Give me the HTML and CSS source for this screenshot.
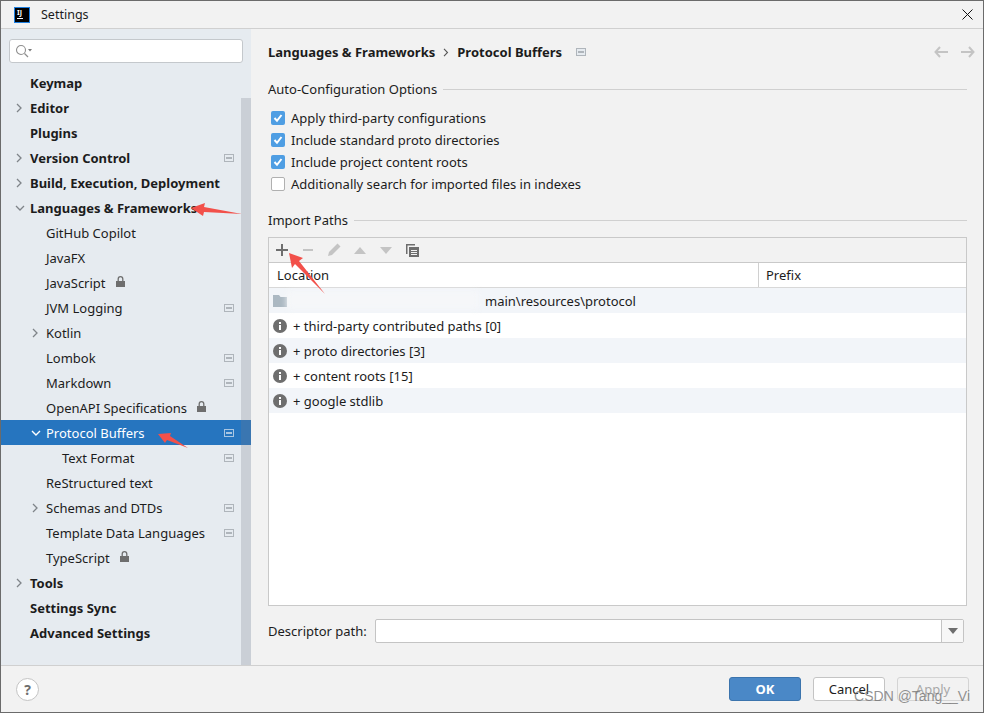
FILE: index.html
```html
<!DOCTYPE html>
<html lang="en">
<head>
    <meta charset="UTF-8">
    <title>Settings</title>
    <link rel="stylesheet" href="styles.css">
</head>
<body>
    <svg class="defs" width="0" height="0">
        <symbol id="pin" viewBox="0 0 10 8"><path d="M0 0h10v8H0z" fill="#afb5bb"/><path d="M1 1h8v6H1z" fill="#e6ebf0"/><path d="M2 3h6v2H2z" fill="#afb5bb"/></symbol>
        <symbol id="pin-sel" viewBox="0 0 10 8"><path d="M0 0h10v8H0z" fill="#a9c6e2"/><path d="M1 1h8v6H1z" fill="#2675bf"/><path d="M2 3h6v2H2z" fill="#a9c6e2"/></symbol>
        <symbol id="right" viewBox="0 0 8 10"><path d="M2 1l4 4-4 4" fill="none" stroke="#7f8489" stroke-width="1.3"/></symbol>
        <symbol id="down" viewBox="0 0 10 8"><path d="M1 2l4 4 4-4" fill="none" stroke="#7f8489" stroke-width="1.3"/></symbol>
        <symbol id="down-sel" viewBox="0 0 10 8"><path d="M1 2l4 4 4-4" fill="none" stroke="#fff" stroke-width="1.4"/></symbol>
        <symbol id="lock" viewBox="0 0 10 11"><path d="M0 5h9v6H0z" fill="#6e6e6e"/><path d="M2.2 5V3a2.3 2.3 0 0 1 4.6 0v2" fill="none" stroke="#6e6e6e" stroke-width="1.3"/></symbol>
        <symbol id="info" viewBox="0 0 14 14"><circle cx="7" cy="7" r="7" fill="#6e6e6e"/><path d="M6 3h2v2H6zM6 6h2v5H6z" fill="#fff"/></symbol>
    </svg>

    <div class="window">
        <div class="titlebar">
            <div class="logo"><span>IJ</span><i></i></div>
            <div class="title">Settings</div>
            <svg class="close" width="11" height="11" viewBox="0 0 11 11"><path d="M.5.5l10 10M10.5.5l-10 10" stroke="#111" stroke-width="1"/></svg>
        </div>

        <div class="main">
            <div class="sidebar">
                <div class="search">
                    <svg width="17" height="14" viewBox="0 0 17 14"><circle cx="6" cy="6" r="4.5" fill="none" stroke="#8f8f8f" stroke-width="1.1"/><path d="M9.5 9.5l3.5 3.5" stroke="#8f8f8f" stroke-width="1.2"/><path d="M13 5h4l-2 2.5z" fill="#7a7a7a"/></svg>
                </div>
                <div class="tree">
                    <div class="row top"><span class="arrow"></span><span>Keymap</span></div>
                    <div class="row top"><span class="arrow"><svg width="8" height="10"><use href="#right"/></svg></span><span>Editor</span></div>
                    <div class="row top"><span class="arrow"></span><span>Plugins</span></div>
                    <div class="row top"><span class="arrow"><svg width="8" height="10"><use href="#right"/></svg></span><span>Version Control</span><svg class="pin" width="10" height="8"><use href="#pin"/></svg></div>
                    <div class="row top"><span class="arrow"><svg width="8" height="10"><use href="#right"/></svg></span><span>Build, Execution, Deployment</span></div>
                    <div class="row top"><span class="arrow"><svg width="10" height="8"><use href="#down"/></svg></span><span>Languages &amp; Frameworks</span></div>
                    <div class="row sub"><span class="arrow"></span><span>GitHub Copilot</span></div>
                    <div class="row sub"><span class="arrow"></span><span>JavaFX</span></div>
                    <div class="row sub"><span class="arrow"></span><span>JavaScript</span><svg class="lock" width="10" height="11"><use href="#lock"/></svg></div>
                    <div class="row sub"><span class="arrow"></span><span>JVM Logging</span><svg class="pin" width="10" height="8"><use href="#pin"/></svg></div>
                    <div class="row sub"><span class="arrow"><svg width="8" height="10"><use href="#right"/></svg></span><span>Kotlin</span></div>
                    <div class="row sub"><span class="arrow"></span><span>Lombok</span><svg class="pin" width="10" height="8"><use href="#pin"/></svg></div>
                    <div class="row sub"><span class="arrow"></span><span>Markdown</span><svg class="pin" width="10" height="8"><use href="#pin"/></svg></div>
                    <div class="row sub"><span class="arrow"></span><span>OpenAPI Specifications</span><svg class="lock" width="10" height="11"><use href="#lock"/></svg></div>
                    <div class="row sub selected"><span class="arrow"><svg width="10" height="8"><use href="#down-sel"/></svg></span><span>Protocol Buffers</span><svg class="pin" width="10" height="8"><use href="#pin-sel"/></svg></div>
                    <div class="row sub2"><span class="arrow"></span><span>Text Format</span><svg class="pin" width="10" height="8"><use href="#pin"/></svg></div>
                    <div class="row sub"><span class="arrow"></span><span>ReStructured text</span></div>
                    <div class="row sub"><span class="arrow"><svg width="8" height="10"><use href="#right"/></svg></span><span>Schemas and DTDs</span><svg class="pin" width="10" height="8"><use href="#pin"/></svg></div>
                    <div class="row sub"><span class="arrow"></span><span>Template Data Languages</span><svg class="pin" width="10" height="8"><use href="#pin"/></svg></div>
                    <div class="row sub"><span class="arrow"></span><span>TypeScript</span><svg class="lock" width="10" height="11"><use href="#lock"/></svg></div>
                    <div class="row top"><span class="arrow"><svg width="8" height="10"><use href="#right"/></svg></span><span>Tools</span></div>
                    <div class="row top"><span class="arrow"></span><span>Settings Sync</span></div>
                    <div class="row top"><span class="arrow"></span><span>Advanced Settings</span></div>
                </div>
                <div class="scrollbar"></div>
            </div>

            <div class="content">
                <div class="crumbs">
                    <b>Languages &amp; Frameworks</b>
                    <svg width="6" height="9" viewBox="0 0 6 9"><path d="M1 .8l3.5 3.7L1 8.200" fill="none" stroke="#555" stroke-width="1.1"/></svg>
                    <b>Protocol Buffers</b>
                    <svg class="crumb-pin" width="10" height="8"><use href="#pin"/></svg>
                    <div class="nav">
                        <svg width="14" height="12" viewBox="0 0 14 12"><path d="M6 1L1.500 6 6 11M2 6h12" fill="none" stroke="#c4c4c4" stroke-width="2"/></svg>
                        <svg width="14" height="12" viewBox="0 0 14 12"><path d="M8 1l4.500 5L8 11M12 6H0" fill="none" stroke="#c4c4c4" stroke-width="2"/></svg>
                    </div>
                </div>

                <div class="group-title"><span>Auto-Configuration Options</span></div>
                <div class="checks">
                    <div class="check"><span class="box on"><svg width="14" height="14" viewBox="0 0 14 14"><path d="M3.500 7l2.500 2.800 4.500-5.800" fill="none" stroke="#fff" stroke-width="2"/></svg></span>Apply third-party configurations</div>
                    <div class="check"><span class="box on"><svg width="14" height="14" viewBox="0 0 14 14"><path d="M3.500 7l2.500 2.800 4.500-5.800" fill="none" stroke="#fff" stroke-width="2"/></svg></span>Include standard proto directories</div>
                    <div class="check"><span class="box on"><svg width="14" height="14" viewBox="0 0 14 14"><path d="M3.500 7l2.500 2.800 4.500-5.800" fill="none" stroke="#fff" stroke-width="2"/></svg></span>Include project content roots</div>
                    <div class="check"><span class="box"></span>Additionally search for imported files in indexes</div>
                </div>

                <div class="group-title second"><span>Import Paths</span></div>
                <div class="table">
                    <div class="toolbar">
                        <span class="tool"><svg width="12" height="12" viewBox="0 0 12 12"><path d="M0 5h12v2H0zM5 0h2v12H5z" fill="#6e6e6e"/></svg></span>
                        <span class="tool"><svg width="12" height="12" viewBox="0 0 12 12"><path d="M1 5h10v2H1z" fill="#c4c4c4"/></svg></span>
                        <span class="tool"><svg width="14" height="14" viewBox="0 0 14 14"><path d="M10.500 0.500l3 3L5 12 1 13l1-4z" fill="#c4c4c4"/></svg></span>
                        <span class="tool"><svg width="12" height="7" viewBox="0 0 12 7"><path d="M6 0l6 7H0z" fill="#c4c4c4"/></svg></span>
                        <span class="tool"><svg width="12" height="7" viewBox="0 0 12 7"><path d="M0 0h12L6 7z" fill="#c4c4c4"/></svg></span>
                        <span class="tool"><svg width="13" height="13" viewBox="0 0 13 13"><path d="M0 0h9v1.500H1.500V10H0z" fill="#6e6e6e"/><path d="M3 3h10v10H3z" fill="#6e6e6e"/><path d="M5 6h6v1H5zM5 8h6v1H5zM5 10h6v1H5z" fill="#f2f2f2"/></svg></span>
                    </div>
                    <div class="thead">
                        <div class="th loc">Location</div>
                        <div class="th">Prefix</div>
                    </div>
                    <div class="trow odd">
                        <svg class="ticon" width="14" height="12" viewBox="0 0 14 12"><path d="M0 0h6l1.500 2H14v10H0z" fill="#abb8c2"/></svg>
                        <span class="path">main\resources\protocol</span>
                        <div class="smudge"></div>
                    </div>
                    <div class="trow"><svg class="ticon" width="14" height="14"><use href="#info"/></svg><span>+ third-party contributed paths [0]</span></div>
                    <div class="trow odd"><svg class="ticon" width="14" height="14"><use href="#info"/></svg><span>+ proto directories [3]</span></div>
                    <div class="trow"><svg class="ticon" width="14" height="14"><use href="#info"/></svg><span>+ content roots [15]</span></div>
                    <div class="trow odd"><svg class="ticon" width="14" height="14"><use href="#info"/></svg><span>+ google stdlib</span></div>
                </div>

                <div class="descriptor">
                    <label>Descriptor path:</label>
                    <div class="combo">
                        <div class="combo-input"></div>
                        <div class="combo-btn"><svg width="10" height="6" viewBox="0 0 10 6"><path d="M0 0h10L5 6z" fill="#6e6e6e"/></svg></div>
                    </div>
                </div>
            </div>
        </div>

        <div class="footer">
            <div class="help">?</div>
            <div class="buttons">
                <div class="btn ok">OK</div>
                <div class="btn">Cancel</div>
                <div class="btn off">Apply</div>
            </div>
        </div>

        <!-- red arrows drawn on the screenshot -->
        <svg class="marks" width="984" height="713" viewBox="0 0 984 713">
            <path d="M191 208l14-5-1 4 38 7-38-2-1 4z" fill="#f2504a"/>
            <path d="M158 434l13-1-1 3 18 12-21-8-2 3z" fill="#f2504a"/>
            <path d="M289 253l14 5-4 3 26 33-30-30-3 4z" fill="#f2504a"/>
        </svg>
        <div class="watermark">CSDN @Tang__Vi</div>
    </div>
</body>
</html>
```

FILE: styles.css
```css
* {
    box-sizing: border-box;
}
body {
    margin: 0;
    font-family: "Noto Sans", sans-serif;
    font-size: 13px;
    color: #1c1c1c;
    background: #f2f2f2;
}
.defs {
    position: absolute;
}
.window {
    position: relative;
    width: 984px;
    height: 713px;
    display: flex;
    flex-direction: column;
    border: 1px solid #6b6b6b;
    background: #f2f2f2;
    overflow: hidden;
}

/* title bar */
.titlebar {
    height: 28px;
    flex: none;
    display: flex;
    align-items: center;
    padding-left: 13px;
    border-bottom: 1px solid #d0d0d0;
}
.logo {
    width: 16px;
    height: 16px;
    background: #000;
    border: 1px solid #1e7fe0;
    color: #fff;
    font-size: 7px;
    font-weight: 700;
    line-height: 9px;
    padding-left: 2px;
    display: flex;
    flex-direction: column;
}
.logo i {
    display: block;
    width: 6px;
    height: 1px;
    margin-top: 1px;
    background: #fff;
}
.title {
    margin-left: 11px;
    font-size: 12.500px;
}
.close {
    margin-left: auto;
    margin-right: 10px;
}

/* layout */
.main {
    flex: 1;
    display: flex;
    min-height: 0;
}
.sidebar {
    position: relative;
    width: 250px;
    flex: none;
    background: #e6ebf0;
    padding-top: 10px;
}
.search {
    height: 24px;
    width: 234px;
    margin-left: 8px;
    background: #fff;
    border: 1px solid #c4c8cc;
    border-radius: 3px;
    display: flex;
    align-items: center;
    padding-left: 5px;
}
.tree {
    margin-top: 7px;
}
.row {
    height: 25px;
    display: flex;
    align-items: center;
    padding-right: 17px;
}
.row.top {
    padding-left: 13px;
    font-weight: 700;
}
.row.sub {
    padding-left: 29px;
}
.row.sub2 {
    padding-left: 45px;
}
.row.selected {
    background: #2675bf;
    color: #fff;
}
.arrow {
    width: 16px;
    flex: none;
    display: flex;
    align-items: center;
    padding-left: 1px;
}
.pin {
    margin-left: auto;
}
.lock {
    margin-left: 10px;
    margin-top: -3px;
}
.scrollbar {
    position: absolute;
    left: 240px;
    top: 69px;
    bottom: 0;
    width: 10px;
    background: rgba(120, 125, 135, .25);
}

/* right panel */
.content {
    flex: 1;
    min-width: 0;
    padding: 0 16px 0 17px;
}
.crumbs {
    height: 46px;
    display: flex;
    align-items: center;
    gap: 8px;
}
.crumbs b {
    font-weight: 700;
}
.crumb-pin {
    margin-left: 6px;
}
.nav {
    margin-left: auto;
    display: flex;
    gap: 13px;
    margin-right: -8px;
}
.group-title {
    height: 20px;
    margin-top: 4px;
    display: flex;
    align-items: center;
    gap: 6px;
}
.group-title::after {
    content: "";
    flex: 1;
    height: 1px;
    background: #d0d0d0;
}
.group-title.second {
    margin-top: 15px;
}
.checks {
    margin-top: 8px;
}
.check {
    height: 22px;
    display: flex;
    align-items: center;
    padding-left: 3px;
}
.box {
    width: 14px;
    height: 14px;
    margin-right: 6px;
    flex: none;
    border-radius: 2px;
    background: #fff;
    border: 1px solid #b0b0b0;
}
.box.on {
    background: #4f9ee3;
    border: none;
}
.box svg {
    display: block;
}

/* import paths table */
.table {
    height: 369px;
    margin-top: 7px;
    background: #fff;
    border: 1px solid #c9c9c9;
}
.toolbar {
    height: 25px;
    display: flex;
    align-items: center;
    background: #f2f2f2;
    border-bottom: 1px solid #c9c9c9;
}
.tool {
    width: 26px;
    display: flex;
    justify-content: center;
    align-items: center;
}
.thead {
    height: 25px;
    display: flex;
    border-bottom: 1px solid #d8d8d8;
}
.th {
    display: flex;
    align-items: center;
    padding-left: 7px;
}
.th.loc {
    width: 490px;
    padding-left: 8px;
    border-right: 1px solid #d0d0d0;
}
.trow {
    position: relative;
    height: 25px;
    display: flex;
    align-items: center;
    padding-left: 4px;
}
.trow.odd {
    background: #f2f5f9;
}
.ticon {
    margin-right: 6px;
    flex: none;
}
.path {
    margin-left: 192px;
}
.smudge {
    position: absolute;
    left: 18px;
    top: 3px;
    width: 192px;
    height: 18px;
    background: #f6f7f9;
    filter: blur(3px);
}
.descriptor {
    margin-top: 13px;
    display: flex;
    align-items: center;
}
.descriptor label {
    width: 107px;
    flex: none;
}
.combo {
    width: 589px;
    height: 24px;
    display: flex;
    background: #fff;
    border: 1px solid #c4c4c4;
    border-radius: 2px;
}
.combo-input {
    flex: 1;
}
.combo-btn {
    width: 22px;
    background: #f7f7f7;
    border-left: 1px solid #c4c4c4;
    display: flex;
    align-items: center;
    justify-content: center;
}

/* bottom bar */
.footer {
    height: 47px;
    flex: none;
    display: flex;
    align-items: center;
    padding: 0 14px 0 15px;
    border-top: 1px solid #d0d0d0;
}
.help {
    width: 23px;
    height: 23px;
    border-radius: 50%;
    background: #fff;
    border: 1px solid #c4c4c4;
    color: #6e6e6e;
    font-weight: 700;
    font-size: 14px;
    display: flex;
    align-items: center;
    justify-content: center;
}
.buttons {
    margin-left: auto;
    display: flex;
    gap: 12px;
}
.btn {
    width: 72px;
    height: 24px;
    background: #fff;
    border: 1px solid #c4c4c4;
    border-radius: 3px;
    display: flex;
    align-items: center;
    justify-content: center;
}
.btn.ok {
    background: #4a88c7;
    border-color: #3b74ad;
    color: #fff;
    font-weight: 700;
}
.btn.off {
    background: #f2f2f2;
    border-color: #d4d4d4;
    color: #a8a8a8;
}

/* things pasted over the screenshot */
.marks {
    position: absolute;
    left: -1px;
    top: -1px;
    pointer-events: none;
}
.watermark {
    position: absolute;
    right: 13px;
    top: 687px;
    font-family: "Liberation Sans", sans-serif;
    font-size: 14px;
    color: rgba(110, 110, 110, .75);
}
```
